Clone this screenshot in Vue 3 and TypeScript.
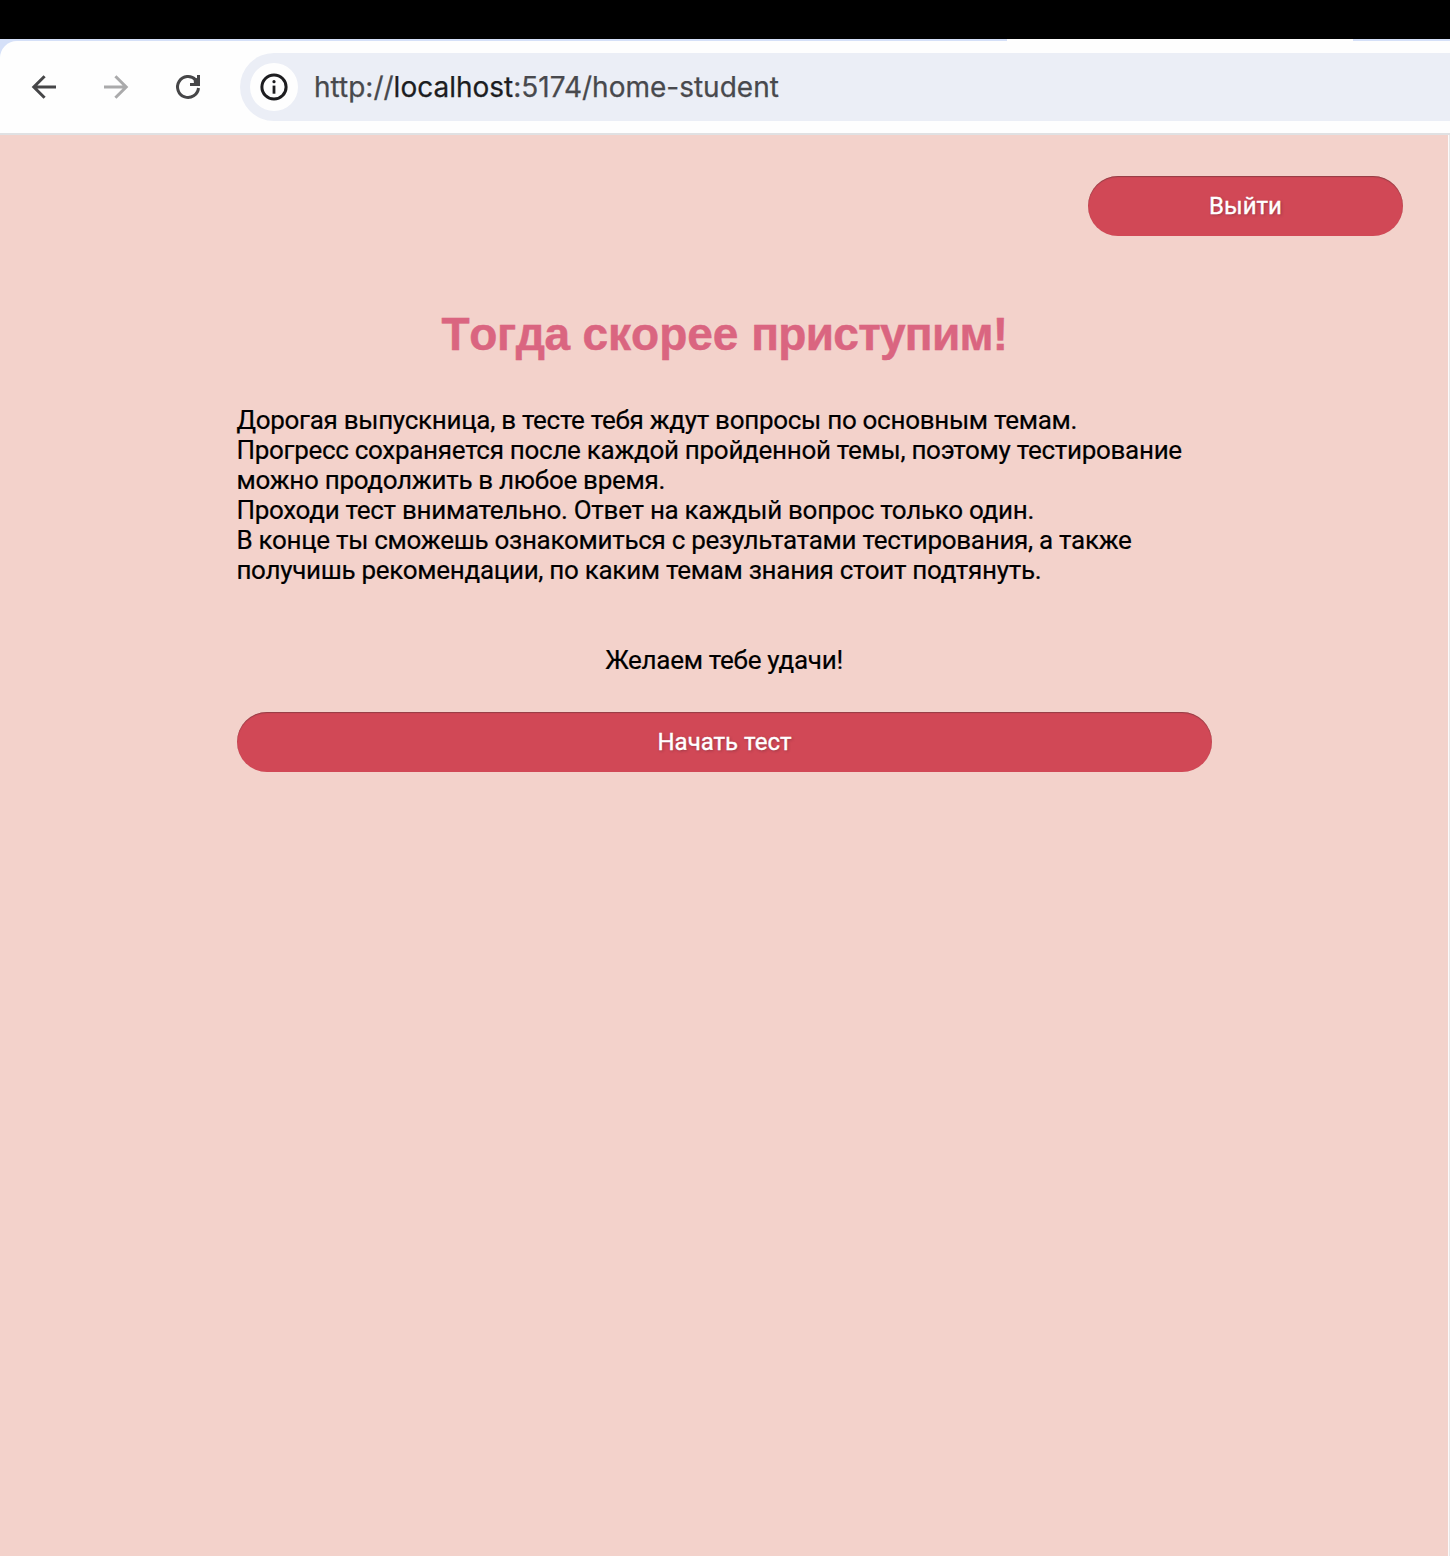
<script setup lang="ts">
const url = { scheme: 'http://', host: 'localhost', rest: ':5174/home-student' }

const lines: string[] = [
  'Дорогая выпускница, в тесте тебя ждут вопросы по основным темам.',
  'Прогресс сохраняется после каждой пройденной темы, поэтому тестирование',
  'можно продолжить в любое время.',
  'Проходи тест внимательно. Ответ на каждый вопрос только один.',
  'В конце ты сможешь ознакомиться с результатами тестирования, а также',
  'получишь рекомендации, по каким темам знания стоит подтянуть.',
]
</script>

<template>
  <div class="window">
    <div class="strip"></div>
    <div class="tabs"><div class="active-tab"></div></div>
    <div class="toolbar-wrap">
      <header class="toolbar">
        <svg class="nav" viewBox="0 0 36 36">
          <path d="M30 18H8M18.6 7.2 7.8 18l10.8 10.8" />
        </svg>
        <svg class="nav disabled" viewBox="0 0 36 36">
          <path d="M6 18h22M17.4 7.2 28.2 18 17.4 28.8" />
        </svg>
        <svg class="nav" viewBox="0 0 36 36">
          <path d="M28.5 19A10.5 10.5 0 1 1 25.6 10.7L27.5 13M28.5 6v9.5H20" />
          <path class="solid" d="M23.5 9.5 28 9v6h-4z" />
        </svg>
        <div class="address">
          <span class="info">
            <svg viewBox="0 0 28 28">
              <circle cx="14" cy="14" r="12.1" fill="none" stroke="#1d1d20" stroke-width="3" />
              <circle cx="14" cy="8.7" r="1.6" fill="#1d1d20" />
              <path d="M14 12.6v8.1" stroke="#1d1d20" stroke-width="2.8" />
            </svg>
          </span>
          <span class="url">{{ url.scheme }}<b>{{ url.host }}</b>{{ url.rest }}</span>
        </div>
      </header>
    </div>
    <main class="page">
      <div class="top"><button class="btn exit">Выйти</button></div>
      <section class="content">
        <h1><span class="first">Тогда</span> скорее <span>приступим!</span></h1>
        <div class="copy">
          <p v-for="line in lines" :key="line">{{ line }}</p>
        </div>
        <p class="wish">Желаем тебе удачи!</p>
        <button class="btn">Начать тест</button>
      </section>
    </main>
  </div>
</template>

<style>
body {
  margin: 0;
}
</style>

<style scoped>
.window {
  display: flex;
  flex-direction: column;
  width: 1450px;
  height: 1556px;
  overflow: hidden;
  font-family: Roboto, sans-serif;
}
.strip {
  height: 39px;
  background: #000;
}
.tabs {
  height: 2px;
  background: #d5e0f8;
}
.active-tab {
  width: 346px;
  height: 2px;
  margin-left: 1007px;
  background: #fefefe;
}
.toolbar-wrap {
  background: #d5e0f8;
}
.toolbar {
  display: flex;
  align-items: center;
  box-sizing: border-box;
  height: 94px;
  padding-left: 26px;
  background: #fefefe;
  border-bottom: 2px solid #e0e1e3;
  border-top-left-radius: 17px;
}
.nav {
  width: 36px;
  height: 36px;
  margin-right: 36px;
  fill: none;
  stroke: #464648;
  stroke-width: 3;
}
.nav .solid {
  fill: #464648;
  stroke: none;
}
.nav.disabled {
  stroke: #aaaaab;
}
.nav:nth-of-type(3) {
  margin-right: 34px;
}
.address {
  display: flex;
  align-items: center;
  flex: 1;
  height: 68px;
  background: #ebeef6;
  border-radius: 34px 0 0 34px;
}
.info {
  display: flex;
  align-items: center;
  justify-content: center;
  width: 48px;
  height: 48px;
  margin: 0 16px 0 10px;
  border-radius: 50%;
  background: #fefefe;
}
.info svg {
  width: 28px;
  height: 28px;
}
.url {
  font: 28px/34px Inter, sans-serif;
  color: #48494d;
  white-space: nowrap;
  -webkit-text-stroke: 0.25px;
}
.url b {
  font-weight: 400;
  color: #1c1d21;
}
.page {
  flex: 1;
  box-sizing: border-box;
  padding-top: 41px;
  background: #f3d2cb;
  border-right: 1px solid #e8e8e8;
  box-shadow: inset -1px 0 #fdfbfb;
}
.top {
  display: flex;
  justify-content: flex-end;
  padding-right: 46px;
}
.btn {
  display: block;
  width: 100%;
  height: 60px;
  padding: 0;
  border: 0;
  border-radius: 30px;
  background: #d14856;
  color: #fff;
  font: 400 24px/60px Roboto, sans-serif;
  -webkit-text-stroke: 0.35px #fff;
  text-align: center;
  text-shadow: 1px 1px 3px rgba(60, 30, 50, 0.4);
  box-shadow: inset 0 1px 1px rgba(80, 50, 50, 0.48);
}
.btn.exit {
  width: 315px;
}
.content {
  width: 975px;
  margin: 72px 0 0 237px;
}
h1 {
  margin: 0;
  font: bold 46px/52px "Liberation Sans", sans-serif;
  font-kerning: none;
  text-align: center;
  white-space: nowrap;
  color: #da6580;
  -webkit-text-stroke: 0.5px #da6580;
}
h1 span {
  letter-spacing: -0.7px;
}
h1 .first {
  letter-spacing: -0.4px;
}
.copy {
  margin: 45px 0 0 -0.6px;
}
p {
  margin: 0;
  font-size: 26px;
  line-height: 30px;
  letter-spacing: -0.29px;
  white-space: nowrap;
  color: #000;
  -webkit-text-stroke: 0.2px #000;
}
.wish {
  margin: 60px 0 37px -1px;
  text-align: center;
}
</style>
